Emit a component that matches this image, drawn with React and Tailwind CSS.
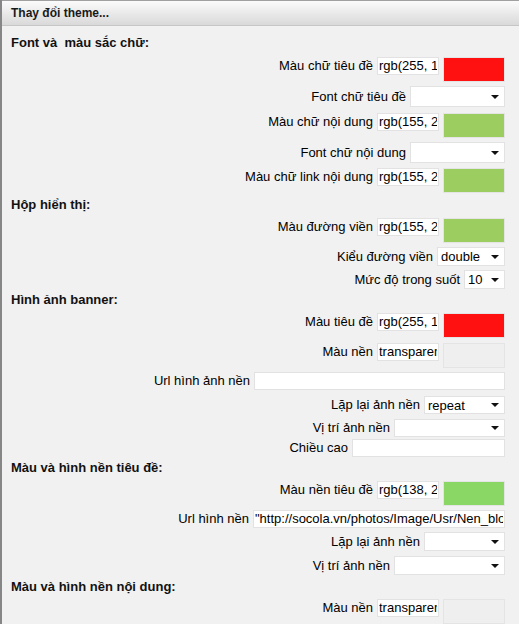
import React from "react";

const SECTIONS = [
  {
    title: "Font và  màu sắc chữ:",
    h: "h-[22px]",
    rows: [
      { type: "color", label: "Màu chữ tiêu đề", value: "rgb(255, 17, 17)", swatch: "bg-[#ff1111]", h: "h-[29px]" },
      { type: "select", label: "Font chữ tiêu đề", value: "", w: "w-[95px]", sh: "h-[21px]", lh: "leading-[21px]", h: "h-[27px]" },
      { type: "color", label: "Màu chữ nội dung", value: "rgb(155, 205, 96)", swatch: "bg-[#9bcd60]", h: "h-[29px]" },
      { type: "select", label: "Font chữ nội dung", value: "", w: "w-[95px]", sh: "h-[21px]", lh: "leading-[21px]", h: "h-[26px]" },
      { type: "color", label: "Màu chữ link nội dung", value: "rgb(155, 205, 96)", swatch: "bg-[#9bcd60]", h: "h-[29px]" },
    ],
  },
  {
    title: "Hộp hiển thị:",
    h: "h-[21px]",
    rows: [
      { type: "color", label: "Màu đường viền", value: "rgb(155, 205, 96)", swatch: "bg-[#9bcd60]", h: "h-[29px]" },
      { type: "select", label: "Kiểu đường viền", value: "double", w: "w-[68px]", sh: "h-[19px]", lh: "leading-[19px]", h: "h-[23px]" },
      { type: "select", label: "Mức độ trong suốt", value: "10", w: "w-[41px]", sh: "h-[19px]", lh: "leading-[19px]", h: "h-[22px]" },
    ],
  },
  {
    title: "Hình ảnh banner:",
    h: "h-[21px]",
    rows: [
      { type: "color", label: "Màu tiêu đề", value: "rgb(255, 17, 17)", swatch: "bg-[#ff1111]", h: "h-[30px]" },
      { type: "color", label: "Màu nền", value: "transparent", swatch: "bg-[#efefef] border-[#c9c9c9]", h: "h-[29px]" },
      { type: "text", label: "Url hình ảnh nền", value: "", w: "w-[251px]", h: "h-[24px]" },
      { type: "select", label: "Lặp lại ảnh nền", value: "repeat", w: "w-[81px]", sh: "h-[18px]", lh: "leading-[18px]", h: "h-[23px]" },
      { type: "select", label: "Vị trí ảnh nền", value: "", w: "w-[111px]", sh: "h-[18px]", lh: "leading-[18px]", h: "h-[20px]" },
      { type: "text", label: "Chiều cao", value: "", w: "w-[153px]", h: "h-[21px]" },
    ],
  },
  {
    title: "Màu và hình nền tiêu đề:",
    h: "h-[21px]",
    rows: [
      { type: "color", label: "Màu nền tiêu đề", value: "rgb(138, 215, 101)", swatch: "bg-[#8ad765]", h: "h-[29px]" },
      { type: "text", label: "Url hình nền", value: '"http://socola.vn/photos/Image/Usr/Nen_blog.jpg"', w: "w-[252px]", h: "h-[22px]" },
      { type: "select", label: "Lặp lại ảnh nền", value: "", w: "w-[81px]", sh: "h-[19px]", lh: "leading-[19px]", h: "h-[24px]" },
      { type: "select", label: "Vị trí ảnh nền", value: "", w: "w-[111px]", sh: "h-[19px]", lh: "leading-[19px]", h: "h-[23px]" },
    ],
  },
  {
    title: "Màu và hình nền nội dung:",
    h: "h-[20px]",
    rows: [
      { type: "color", label: "Màu nền", value: "transparent", swatch: "bg-[#efefef] border-[#c9c9c9]", h: "h-[29px]" },
    ],
  },
];

function MuiTen() {
  return (
    <svg width="8" height="4" viewBox="0 0 8 4" className="shrink-0">
      <path d="M0 0h8L4 4z" fill="#111" />
    </svg>
  );
}

function Dong({ row }) {
  if (row.type === "color") {
    return (
      <div className={`flex items-start justify-end gap-1 ${row.h}`}>
        <span className="leading-[18px]">{row.label}</span>
        <input
          readOnly
          value={row.value}
          className="h-[18px] w-[62px] border border-[#e2e2e2] bg-white px-[1px] text-[13px] text-black outline-none"
        />
        <div className={`h-[25px] w-[62px] border border-[#e4e4e4] ${row.swatch}`} />
      </div>
    );
  }

  if (row.type === "select") {
    return (
      <div className={`flex items-start justify-end gap-1 ${row.h}`}>
        <span className={row.lh}>{row.label}</span>
        <div
          className={`flex items-center justify-between border border-[#e2e2e2] bg-white pl-[3px] pr-[5px] text-black ${row.w} ${row.sh}`}
        >
          <span className="leading-none">{row.value}</span>
          <MuiTen />
        </div>
      </div>
    );
  }

  return (
    <div className={`flex items-start justify-end gap-1 ${row.h}`}>
      <span className="leading-[18px]">{row.label}</span>
      <input
        readOnly
        value={row.value}
        className={`h-[18px] border border-[#e2e2e2] bg-white px-[1px] text-[13px] text-black outline-none ${row.w}`}
      />
    </div>
  );
}

export default function App() {
  return (
    <div className="h-[624px] w-[519px] overflow-hidden border-l-2 border-[#868686] bg-[#f1f1f1] font-['Liberation_Sans',Arial,sans-serif] text-[13px] text-black">
      <div className="flex h-[26px] items-center border-b border-t border-b-[#c6c6c6] border-t-[#a0a0a0] bg-linear-to-b from-[#fbfbfb] to-[#d9d9d9] pl-[9px] text-[12px] font-bold text-[#1a1a1a]">
        Thay đổi theme...
      </div>

      <div className="pl-[9px] pr-[14px] pt-[9px]">
        {SECTIONS.map((sec) => (
          <section key={sec.title}>
            <h3 className={`whitespace-pre text-[13px] font-bold leading-[15px] text-[#111] ${sec.h}`}>
              {sec.title}
            </h3>
            {sec.rows.map((row, i) => (
              <Dong key={i} row={row} />
            ))}
          </section>
        ))}
      </div>
    </div>
  );
}
